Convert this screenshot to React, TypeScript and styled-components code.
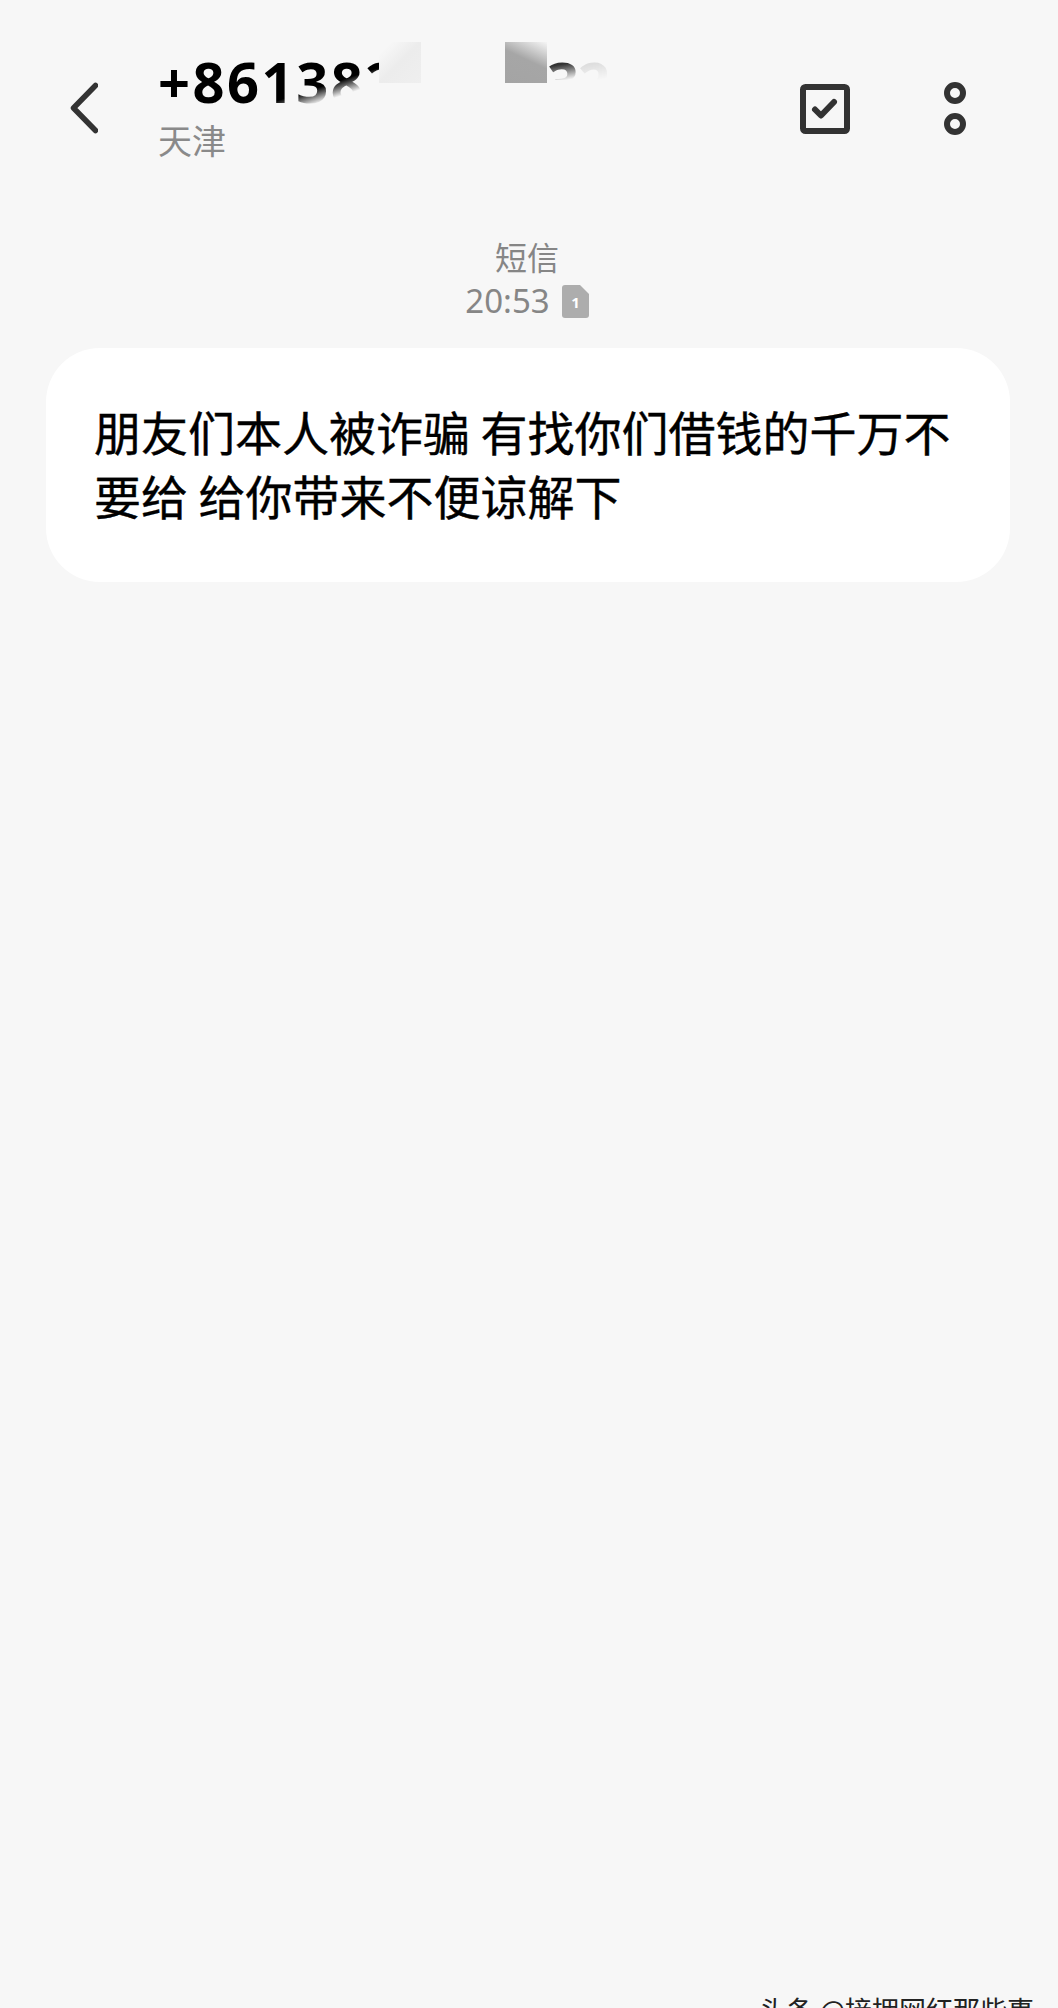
import React from "react";
import styled, { createGlobalStyle } from "styled-components";

const Global = createGlobalStyle`
  html, body { margin: 0; padding: 0; background: #f7f7f7; }
  body { font-family: "Noto Sans CJK SC", "Noto Sans", sans-serif; }
`;

const Page = styled.div`
  width: 1058px;
  height: 2008px;
  overflow: hidden;
  background: #f7f7f7;
  display: flex;
  flex-direction: column;
`;

const Header = styled.header`
  height: 177px;
  display: flex;
  align-items: flex-start;
  padding: 0 92px 0 70px;
  box-sizing: border-box;
`;

const BackIcon = styled.svg`
  width: 28px;
  height: 52px;
  margin-top: 82px;
  flex: none;
`;

const TitleBlock = styled.div`
  position: relative;
  margin-left: 60px;
  flex: 1;
  padding-top: 44px;
`;

const Phone = styled.div`
  font-family: "Noto Sans", sans-serif;
  font-weight: 700;
  font-size: 56px;
  letter-spacing: 2.5px;
  line-height: 74px;
  color: #000;
  width: 262px;
  white-space: nowrap;
  -webkit-mask-image: linear-gradient(162deg, #000 60%, transparent 70%);
  mask-image: linear-gradient(162deg, #000 60%, transparent 70%);
`;

const Region = styled.div`
  font-size: 34px;
  line-height: 40px;
  color: #8a8a8a;
  margin-top: 2px;
`;

const Smudge = styled.div<{ $left: number; $bg: string }>`
  position: absolute;
  top: 42px;
  left: ${(p) => p.$left}px;
  width: 42px;
  height: 41px;
  background: ${(p) => p.$bg};
`;

const Fragment = styled.div<{ $left: number; $color: string }>`
  position: absolute;
  top: 44px;
  left: ${(p) => p.$left}px;
  width: 32px;
  height: 36px;
  font-family: "Noto Sans", sans-serif;
  font-weight: 700;
  font-size: 56px;
  line-height: 74px;
  color: ${(p) => p.$color};
  -webkit-mask-image: linear-gradient(170deg, #000 55%, transparent 95%);
  mask-image: linear-gradient(170deg, #000 55%, transparent 95%);
`;

const Actions = styled.div`
  display: flex;
  gap: 94px;
  margin-top: 82px;
  align-items: center;
`;

const ActionIcon = styled.svg<{ $w: number; $h: number }>`
  width: ${(p) => p.$w}px;
  height: ${(p) => p.$h}px;
  flex: none;
`;

const Meta = styled.div`
  display: flex;
  flex-direction: column;
  align-items: center;
  color: #868686;
  margin-top: 56px;
  padding-right: 4px;
`;

const MetaLabel = styled.div`
  font-size: 32px;
  line-height: 46px;
`;

const MetaTime = styled.div`
  display: flex;
  align-items: center;
  gap: 12px;
  font-family: "Noto Sans", sans-serif;
  font-size: 33px;
  line-height: 44px;
`;

const SimIcon = styled.svg`
  width: 27px;
  height: 33px;
  flex: none;
`;

const Bubble = styled.div`
  margin: 25px 48px 0 46px;
  height: 234px;
  box-sizing: border-box;
  padding: 51px 48px 0;
  background: #fff;
  border-radius: 54px;
  font-size: 47px;
  line-height: 64px;
  -webkit-text-stroke: 0.4px #000;
  color: #000;
`;

const Watermark = styled.div`
  margin-top: auto;
  margin-bottom: -22px;
  padding-right: 24px;
  text-align: right;
  font-size: 27px;
  line-height: 40px;
  color: #222;
`;

export default function App() {
  return (
    <Page>
      <Global />
      <Header>
        <BackIcon viewBox="0 0 28 52">
          <path d="M25.5 3.5 L3.5 26 L25.5 48.5" fill="none" stroke="#333" strokeWidth="5.5" strokeLinecap="round" strokeLinejoin="round" />
        </BackIcon>
        <TitleBlock>
          <Phone>+861382</Phone>
          <Region>天津</Region>
          <Smudge $left={221} $bg="linear-gradient(135deg, #f7f7f7 15%, #ececec 50%, #efefef 100%)" />
          <Smudge $left={347} $bg="linear-gradient(205deg, #f2f2f2 2%, #a6a6a6 45%, #a4a4a4 100%)" />
          <Fragment $left={389} $color="#333">3</Fragment>
          <Fragment $left={420} $color="#dedede">2</Fragment>
        </TitleBlock>
        <Actions>
          <ActionIcon $w={50} $h={50} viewBox="0 0 50 50">
            <rect x="3" y="3" width="44" height="44" rx="2.5" fill="none" stroke="#333" strokeWidth="6" />
            <path d="M15 25.5 L21 31.5 L34 18" fill="none" stroke="#333" strokeWidth="6" strokeLinecap="round" strokeLinejoin="round" />
          </ActionIcon>
          <ActionIcon $w={22} $h={53} viewBox="0 0 22 53">
            <circle cx="11" cy="11" r="8" fill="none" stroke="#333" strokeWidth="6" />
            <circle cx="11" cy="42" r="8" fill="none" stroke="#333" strokeWidth="6" />
          </ActionIcon>
        </Actions>
      </Header>
      <Meta>
        <MetaLabel>短信</MetaLabel>
        <MetaTime>
          20:53
          <SimIcon viewBox="0 0 27 33">
            <path d="M3 0 H18 L27 9 V30 a3 3 0 0 1 -3 3 H3 a3 3 0 0 1 -3 -3 V3 a3 3 0 0 1 3 -3 Z" fill="#adadad" />
            <text x="13.5" y="23" textAnchor="middle" fontSize="15" fontWeight="700" fill="#fff" fontFamily="Noto Sans">1</text>
          </SimIcon>
        </MetaTime>
      </Meta>
      <Bubble>
        朋友们本人被诈骗 有找你们借钱的千万不要给 给你带来不便谅解下
      </Bubble>
      <Watermark>头条 @接拥网红那些事</Watermark>
    </Page>
  );
}
